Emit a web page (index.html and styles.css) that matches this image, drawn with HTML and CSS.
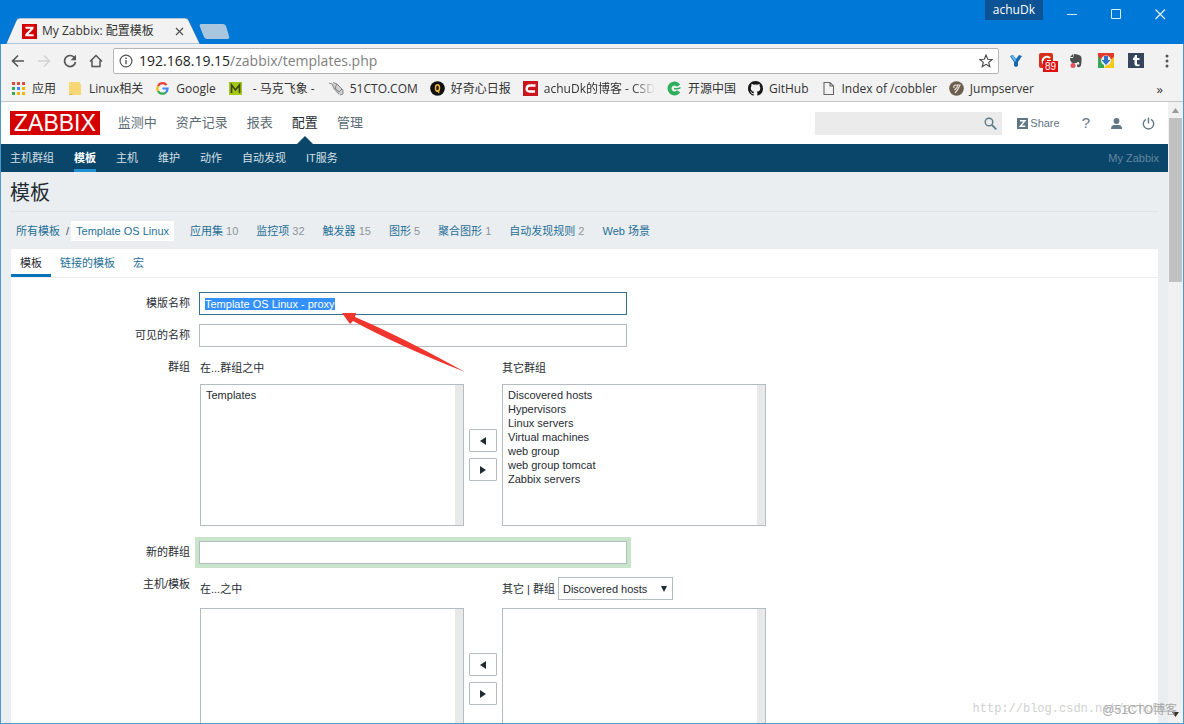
FILE: index.html
```html
<!DOCTYPE html>
<html lang="zh-CN">
<head>
<meta charset="utf-8">
<title>My Zabbix: 配置模板</title>
<link rel="stylesheet" href="styles.css">
</head>
<body>
<div class="window">
  <div class="titlebar">
    <div class="tab">
      <svg class="tab-shape" viewBox="0 0 194 26" preserveAspectRatio="none"><path d="M0 26 L10 3 Q11 0 14 0 H179 Q182 0 183 3 L194 26Z" fill="#f2f2f2" stroke="#0a5ea8" stroke-width=".6"/></svg>
      <svg class="favicon" width="15" height="15" viewBox="0 0 15 15"><rect width="15" height="15" fill="#d40000"/><path d="M3.500 2.800h8v2L6.300 10.200h5.300v2H3.300v-2L8.500 4.800h-5z" fill="#fff"/></svg>
      <span class="tab-title">My Zabbix: 配置模板</span>
      <button class="tab-close" aria-label="关闭标签页"><svg width="9" height="9" viewBox="0 0 9 9"><path d="M1 1l7 7M8 1l-7 7" stroke="#555" stroke-width="1.3"/></svg></button>
    </div>
    <button class="new-tab" aria-label="新标签页"><svg width="31" height="15" viewBox="0 0 31 15"><path d="M2 0h22q2 0 3 2l3 10q1 3-2 3H8q-2 0-3-2L1 3Q0 0 2 0z" fill="#a9c6de"/></svg></button>
    <div class="win-controls">
      <span class="profile">achuDk</span>
      <button aria-label="最小化"><svg width="11" height="11" viewBox="0 0 11 11"><path d="M0 5.500h10" stroke="#cfeaf5"/></svg></button>
      <button aria-label="最大化"><svg width="11" height="11" viewBox="0 0 11 11"><path d="M.5.5h9v9h-9z" fill="none" stroke="#d8f0f5"/></svg></button>
      <button aria-label="关闭"><svg width="11" height="11" viewBox="0 0 11 11"><path d="M.5.5l9.500 9.500M10 .5L.5 10" stroke="#e8f4fa" stroke-width="1.100"/></svg></button>
    </div>
  </div>

  <div class="toolbar">
    <div class="nav-buttons">
      <button aria-label="后退"><svg width="14" height="14" viewBox="0 0 14 14"><path d="M13 7H2M7 1.500L1.500 7 7 12.500" fill="none" stroke="#555" stroke-width="1.600"/></svg></button>
      <button aria-label="前进"><svg width="14" height="14" viewBox="0 0 14 14"><path d="M1 7h11M7 1.500L12.500 7 7 12.500" fill="none" stroke="#d3d3d3" stroke-width="1.600"/></svg></button>
      <button aria-label="重新加载"><svg width="14" height="14" viewBox="0 0 14 14"><path d="M11.500 3.700A5.500 5.500 0 1 0 12.500 8" fill="none" stroke="#555" stroke-width="1.700"/><path d="M13 .8v5.400H7.600z" fill="#555"/></svg></button>
      <button aria-label="主页"><svg width="14" height="14" viewBox="0 0 14 14"><path d="M1 7.500L7 1.500l6 6M3 6.500V12.500h8V6.500" fill="none" stroke="#555" stroke-width="1.500"/></svg></button>
    </div>
    <div class="omnibox">
      <svg width="14" height="14" viewBox="0 0 14 14"><circle cx="7" cy="7" r="5.900" fill="none" stroke="#555" stroke-width="1.200"/><path d="M7 6v4.200M7 3.600v1.400" stroke="#555" stroke-width="1.400"/></svg>
      <span class="url"><span class="host">192.168.19.15</span>/zabbix/templates.php</span>
      <button aria-label="收藏"><svg width="14" height="14" viewBox="0 0 14 14"><path d="M7 1l1.700 4.200 4.400.3-3.400 2.900 1.100 4.400L7 10.400l-3.800 2.400 1.100-4.400L.9 5.500l4.400-.3z" fill="none" stroke="#444" stroke-width="1.100"/></svg></button>
    </div>
    <div class="extensions">
      <button aria-label="扩展 Y"><svg width="16" height="16" viewBox="0 0 16 16"><path d="M2 3l3-1 3 4 3-4 3 1-4 6v4l-2 1-2-1V9z" fill="#1767b3"/><path d="M3 3l2-.5L8 7l-1 2z" fill="#60c3f2"/></svg></button>
      <button class="ext-badged" aria-label="扩展 C"><svg width="16" height="16" viewBox="0 0 16 16"><rect x="1" width="14" height="15" rx="2" fill="#d83018"/><path d="M12 5a4.300 4.300 0 1 0 0 6M9 8h4" fill="none" stroke="#fff" stroke-width="2"/></svg><span class="badge">89</span></button>
      <button aria-label="Evernote"><svg width="16" height="16" viewBox="0 0 16 16"><path d="M6 1q4 0 6 1.500 2 1 1.500 5 0 6-2 6.500-3 1-2.500-2 1-1.500 2 0 1-3-1-3-3 2-5.500 1Q2 9 2 5h3z" fill="#4b4f4d"/><path d="M2 4l3-3v3z" fill="#4b4f4d"/><circle cx="5" cy="12.500" r="2.500" fill="#e2535d"/></svg></button>
      <button aria-label="下载"><svg width="16" height="16" viewBox="0 0 16 16"><path d="M0 0h16v8H0z" fill="#e23b2e"/><path d="M0 3l6 7v5H0z" fill="#3aa757"/><path d="M16 4v11H6l5-7z" fill="#f8c816"/><circle cx="8" cy="7.500" r="5" fill="#e9eef5"/><path d="M6 3h4v4h2.500L8 12 3.500 7H6z" fill="#2f73c8"/></svg></button>
      <button aria-label="Tumblr"><svg width="16" height="16" viewBox="0 0 16 16"><rect width="16" height="15" fill="#35465c"/><path d="M7 2h2v3h2.500v2H9v3.500q0 1.500 2.500.8V13Q6.500 14.200 6.500 10.500V7H5V5.300Q7 4.500 7 2z" fill="#fff"/></svg></button>
      <button class="menu" aria-label="菜单"><svg width="4" height="14" viewBox="0 0 4 14"><g fill="#555"><circle cx="2" cy="2" r="1.500"/><circle cx="2" cy="7" r="1.500"/><circle cx="2" cy="12" r="1.500"/></g></svg></button>
    </div>
  </div>

  <nav class="bookmarks">
    <a href="#"><svg width="15" height="15" viewBox="0 0 15 15"><path d="M1 1h3v3H1zM6 1h3v3H6zM11 1h3v3h-3z" fill="#e04a3f"/><path d="M1 6h3v3H1z" fill="#3aa757"/><path d="M6 6h3v3H6z" fill="#4285f4"/><path d="M11 6h3v3h-3zM11 11h3v3h-3zM6 11h3v3H6z" fill="#f4b400"/><path d="M1 11h3v3H1z" fill="#3aa757"/></svg>应用</a>
    <a href="#"><svg width="15" height="15" viewBox="0 0 15 15"><path d="M1 1h11v2h1v11H1z" fill="#f7d774"/><path d="M1 13h3l1 1H1z" fill="#d9b44c"/></svg>Linux相关</a>
    <a href="#"><svg width="15" height="15" viewBox="0 0 15 15" fill="none" stroke-width="2.200"><path d="M11.500 4A5 5 0 0 0 3 5" stroke="#ea4335"/><path d="M3 5a5 5 0 0 0 0 5" stroke="#fbbc05"/><path d="M3 10a5 5 0 0 0 8 1.200" stroke="#34a853"/><path d="M7.500 7.500h5q0 2.500-1.500 4" stroke="#4285f4"/></svg>Google</a>
    <a href="#"><svg width="15" height="15" viewBox="0 0 15 15"><rect x="1" y="1" width="13" height="13" fill="#a5c61b"/><path d="M3.500 12V4L7.500 9l4-5v8" fill="none" stroke="#3c4a10" stroke-width="1.700"/></svg><span class="spaced">- 马克飞象 -</span></a>
    <a href="#"><svg width="15" height="15" viewBox="0 0 15 15"><path d="M3 2l5 1 6 6v4l-4 1-6-6z" fill="#cfcfcf"/><path d="M0 2l3 1 2 4M4 1.500l4 1.500 6 6v4l-3 1M5 7l5 6M8 3L6 7l4 4 3-3" stroke="#888" fill="none"/></svg>51CTO.COM</a>
    <a href="#"><svg width="15" height="15" viewBox="0 0 15 15"><circle cx="7.500" cy="7.500" r="7.300" fill="#111"/><ellipse cx="7.500" cy="7" rx="2" ry="3.300" fill="none" stroke="#f0b73a" stroke-width="1.500"/><path d="M7.500 9l1.500 3" stroke="#f0b73a" stroke-width="1.400"/></svg>好奇心日报</a>
    <a href="#"><svg width="15" height="15" viewBox="0 0 15 15"><rect width="15" height="15" fill="#c9151e"/><path d="M12.500 4.500H7Q4 4.500 3.700 7.500 3.500 10.500 6.500 10.500h5.500" fill="none" stroke="#fff" stroke-width="2.400"/></svg><span class="faded">achuDk的博客 - CSD</span></a>
    <a href="#"><svg width="15" height="15" viewBox="0 0 15 15"><path d="M11.600 4.600A5 5 0 1 0 11.600 10.400" fill="none" stroke="#2fae5c" stroke-width="4"/><path d="M7 7.500q4 1 6.500-1" fill="none" stroke="#2fae5c" stroke-width="1.500"/></svg>开源中国</a>
    <a href="#"><svg width="15" height="15" viewBox="0 0 16 16"><path fill="#181616" d="M8 0C3.580 0 0 3.580 0 8c0 3.540 2.290 6.530 5.470 7.590.4.070.55-.17.55-.38v-1.490c-2.010.37-2.530-.49-2.690-.94-.09-.23-.48-.94-.82-1.130-.28-.15-.68-.52-.01-.53.63-.01 1.080.58 1.230.82.720 1.210 1.870.87 2.330.66.070-.52.280-.87.510-1.070-1.780-.2-3.640-.89-3.640-3.950 0-.87.310-1.590.82-2.150-.08-.2-.36-1.020.08-2.120 0 0 .67-.21 2.200.82a7.500 7.500 0 0 1 4 0c1.530-1.040 2.200-.82 2.200-.82.440 1.100.160 1.920.080 2.120.510.560.820 1.270.820 2.150 0 3.070-1.870 3.750-3.650 3.950.290.250.540.730.540 1.480v2.200c0 .21.150.46.550.38A8 8 0 0 0 16 8c0-4.420-3.580-8-8-8z"/></svg>GitHub</a>
    <a href="#"><svg width="15" height="15" viewBox="0 0 15 15"><path d="M3 1.500h6l3.500 3.500v8.500H3zM9 1.500V5h3.500" fill="none" stroke="#666" stroke-width="1.100"/></svg>Index of /cobbler</a>
    <a href="#"><svg width="15" height="15" viewBox="0 0 15 15"><circle cx="7.500" cy="7.500" r="7.300" fill="#6b5f50"/><path d="M5 7q-1-3 2-3 2 0 1 2.500L5.500 9M8 4h3Q9 9 6 12" fill="none" stroke="#e9e2d6" stroke-width="1.200"/></svg>Jumpserver</a>
    <button class="more" aria-label="更多书签">»</button>
  </nav>

  <div class="viewport">
    <div class="page">
      <header class="header">
        <a class="logo" href="#">ZABBIX</a>
        <nav class="main-nav">
          <a href="#">监测中</a><a href="#">资产记录</a><a href="#">报表</a><a href="#" class="selected">配置</a><a href="#">管理</a>
        </nav>
        <div class="search">
          <input type="text" aria-label="搜索">
          <button aria-label="搜索"><svg width="13" height="13" viewBox="0 0 13 13"><circle cx="5" cy="5" r="3.800" fill="none" stroke="#5f7a86" stroke-width="1.400"/><path d="M7.800 7.800l4.500 4.500" stroke="#5f7a86" stroke-width="1.800"/></svg></button>
        </div>
        <a class="share" href="#"><svg width="11" height="11" viewBox="0 0 11 11"><rect width="11" height="11" fill="#5f7684"/><path d="M3 2.800h5L3.300 8.200h5" fill="none" stroke="#fff" stroke-width="1.400"/></svg>Share</a>
        <a class="help" href="#">?</a>
        <a class="icon-link" href="#" aria-label="用户"><svg width="13" height="13" viewBox="0 0 13 13" fill="#5f7684"><circle cx="6.500" cy="4" r="2.900"/><path d="M1 12q0-4 3.500-4h4Q12 8 12 12z"/></svg></a>
        <a class="icon-link" href="#" aria-label="退出"><svg width="13" height="13" viewBox="0 0 13 13"><path d="M4 2.300a5.200 5.200 0 1 0 5 0M6.500.5v6" fill="none" stroke="#5f7684" stroke-width="1.400"/></svg></a>
      </header>

      <nav class="sub-nav">
        <a href="#">主机群组</a><a href="#" class="selected">模板</a><a href="#">主机</a><a href="#">维护</a><a href="#">动作</a><a href="#">自动发现</a><a href="#">IT服务</a>
        <span class="server-name">My Zabbix</span>
      </nav>

      <main class="content">
        <h1>模板</h1>
        <nav class="filter">
          <a class="all" href="#">所有模板</a><span class="slash">/</span><a class="current" href="#">Template OS Linux</a>
          <span><a href="#">应用集</a> 10</span>
          <span><a href="#">监控项</a> 32</span>
          <span><a href="#">触发器</a> 15</span>
          <span><a href="#">图形</a> 5</span>
          <span><a href="#">聚合图形</a> 1</span>
          <span><a href="#">自动发现规则</a> 2</span>
          <span><a href="#">Web 场景</a></span>
        </nav>

        <section class="card">
          <nav class="tabs"><a href="#" class="selected">模板</a><a href="#">链接的模板</a><a href="#">宏</a></nav>
          <form class="form">
            <label class="label" for="name">模版名称</label>
            <div class="field">
              <input id="name" class="text" type="text" value="Template OS Linux - proxy">
              <svg class="arrow" width="124" height="60" viewBox="0 0 124 60"><path d="M0 0L14 0 13 4Q60 24 123 59Q55 32 11 8L8 11z" fill="#f0352f"/></svg>
            </div>
            <label class="label" for="visible">可见的名称</label>
            <div class="field"><input id="visible" class="text" type="text"></div>

            <span class="label">群组</span>
            <div class="field picker">
              <label class="head" for="in-groups">在...群组之中</label>
              <label class="head last" for="other-groups">其它群组</label>
              <select id="in-groups" class="list" multiple><option>Templates</option></select>
              <div class="moves">
                <button type="button" aria-label="添加群组"><svg width="6" height="8" viewBox="0 0 6 8"><path d="M6 0v8L0 4z" fill="#1f2c33"/></svg></button>
                <button type="button" aria-label="移除群组"><svg width="6" height="8" viewBox="0 0 6 8"><path d="M0 0v8l6-4z" fill="#1f2c33"/></svg></button>
              </div>
              <select id="other-groups" class="list" multiple>
                <option>Discovered hosts</option><option>Hypervisors</option><option>Linux servers</option><option>Virtual machines</option><option>web group</option><option>web group tomcat</option><option>Zabbix servers</option>
              </select>
            </div>

            <label class="label label-new" for="new-group">新的群组</label>
            <div class="field field-new"><input id="new-group" class="text highlighted" type="text"></div>

            <span class="label label-hosts">主机/模板</span>
            <div class="field picker picker-hosts">
              <label class="head" for="in-hosts">在...之中</label>
              <div class="head last"><label for="group">其它 | 群组</label>
                <span class="dropdown"><select id="group"><option>Discovered hosts</option></select><svg width="6" height="6" viewBox="0 0 6 6"><path d="M0 0h6L3 6z" fill="#1f2c33"/></svg></span>
              </div>
              <select id="in-hosts" class="list" multiple></select>
              <div class="moves">
                <button type="button" aria-label="添加主机"><svg width="6" height="8" viewBox="0 0 6 8"><path d="M6 0v8L0 4z" fill="#1f2c33"/></svg></button>
                <button type="button" aria-label="移除主机"><svg width="6" height="8" viewBox="0 0 6 8"><path d="M0 0v8l6-4z" fill="#1f2c33"/></svg></button>
              </div>
              <select class="list" multiple aria-label="其它"></select>
            </div>
          </form>
        </section>
      </main>
    </div>
    <div class="scrollbar">
      <svg width="7" height="5" viewBox="0 0 7 5"><path d="M3.500 0L7 5H0z" fill="#9a9a9a"/></svg>
      <div class="thumb"></div>
      <svg class="down" width="7" height="5" viewBox="0 0 7 5"><path d="M0 0h7L3.500 5z" fill="#333"/></svg>
    </div>
    <span class="watermark csdn">http://blog.csdn.net/achuDk</span>
    <span class="watermark cto">@51CTO博客</span>
  </div>
</div>
<script src="main.js"></script>
</body>
</html>
```
FILE: styles.css
```css
* { box-sizing: border-box; }
body {
  margin: 0;
  height: 100vh;
  overflow: hidden;
  font: 11px/14px "Liberation Sans", "Noto Sans CJK SC", sans-serif;
  color: #1f2c33;
}
button { margin: 0; padding: 0; border: 0; background: none; font: inherit; color: inherit; }
svg { display: block; flex: none; }
a { color: inherit; text-decoration: none; }
input, select { font: inherit; color: inherit; }

.window {
  display: flex;
  flex-direction: column;
  height: 100vh;
  border: solid #4d9ac9;
  border-width: 0 1px 1px;
  background: #f2f2f2;
}

/* Browser chrome */
.titlebar, .toolbar, .bookmarks { font-family: "Open Sans", "Noto Sans CJK SC", sans-serif; }
.titlebar {
  display: flex;
  align-items: flex-end;
  height: 44px;
  margin: 0 -1px;
  padding-left: 6px;
  background: #0078d7;
}
.tab {
  position: relative;
  display: flex;
  align-items: center;
  width: 194px;
  height: 26px;
  padding: 0 16px;
  font-size: 12px;
  color: #333;
}
.tab-shape { position: absolute; inset: 0; width: 100%; height: 100%; }
.favicon, .tab-title, .tab-close { position: relative; }
.tab-title { flex: 1; margin-left: 5px; white-space: nowrap; }
.new-tab { margin: 0 0 5px -1px; }
.win-controls {
  display: flex;
  align-self: flex-start;
  gap: 33px;
  margin-left: auto;
  padding-right: 18px;
}
.win-controls button { padding-top: 9px; }
.profile {
  margin-right: -9px;
  padding: 0 8px;
  background: #0b5394;
  color: #fff;
  font-size: 12px;
  line-height: 20px;
}
.toolbar { display: flex; align-items: center; height: 34px; padding: 0 10px; }
.nav-buttons { display: flex; gap: 12px; margin-right: 10px; }
.omnibox {
  flex: 1;
  display: flex;
  align-items: center;
  height: 26px;
  padding: 0 5px;
  border: 1px solid #b5b5b5;
  border-radius: 2px;
  background: #fff;
}
.url { flex: 1; margin-left: 6px; font-size: 14px; line-height: 18px; color: #808080; }
.host { color: #222; }
.extensions { display: flex; align-items: center; gap: 14px; margin-left: 9px; }
.extensions .menu { width: 12px; padding-left: 4px; margin-left: 3px; }
.ext-badged { position: relative; }
.badge {
  position: absolute;
  left: 5px;
  top: 8px;
  padding: 0 2px;
  background: #e01010;
  color: #fff;
  font: 10px/11px "Liberation Sans", sans-serif;
}
.bookmarks {
  display: flex;
  gap: 12px;
  height: 24px;
  padding: 0 20px 2px 10px;
  border-bottom: 1px solid #c4c4c4;
  font-size: 12px;
  color: #333;
}
.bookmarks a { display: flex; align-items: center; gap: 6px; white-space: nowrap; }
.spaced { padding: 0 2px 0 4px; }
.faded {
  -webkit-mask-image: linear-gradient(to right, #000 80%, transparent);
  mask-image: linear-gradient(to right, #000 80%, transparent);
}
.more { margin-left: auto; font-size: 13px; }

/* Page */
.viewport { position: relative; flex: 1; display: flex; min-height: 0; overflow: hidden; }
.page { flex: 1; min-width: 0; background: #ebeef0; }
.scrollbar {
  display: flex;
  flex-direction: column;
  align-items: center;
  width: 15px;
  padding: 6px 1px;
  background: #f1f1f1;
}
.thumb { width: 13px; height: 164px; margin-top: 5px; background: #c1c1c1; }
.down { margin-top: auto; }

.header { display: flex; align-items: center; height: 42px; padding: 0 13px 0 9px; background: #fff; }
.logo { padding: 0 4px; background: #d40000; color: #fff; font-size: 23px; line-height: 24px; }
.main-nav { display: flex; align-self: stretch; gap: 19px; margin-left: 18px; font-size: 13px; line-height: 42px; color: #5c6b75; }
.main-nav a { position: relative; }
.main-nav .selected { color: #1f2c33; }
.main-nav .selected::after {
  content: "";
  position: absolute;
  left: 50%;
  bottom: 0;
  margin-left: -8px;
  border: solid transparent;
  border-width: 0 8px 8px;
  border-bottom-color: #0a466a;
}
.search { display: flex; align-items: center; width: 187px; height: 23px; margin-left: auto; padding-right: 5px; background: #ebebeb; }
.search input { flex: 1; min-width: 0; border: 0; background: none; }
.share { display: flex; align-items: center; gap: 2px; margin-left: 15px; color: #5f7684; }
.help { margin: 0 20px 0 22px; color: #5f7684; font-size: 15px; }
.icon-link + .icon-link { margin-left: 19px; }

.sub-nav { display: flex; gap: 20px; height: 28px; padding: 0 9px; background: #0a466a; color: #d5e0e7; line-height: 28px; }
.sub-nav .selected { border-bottom: 3px solid #1f8fd0; color: #fff; font-weight: bold; }
.server-name { margin-left: auto; color: #6487a0; }

.content { padding: 0 10px; }
h1 { margin: 0 0 0 -1px; padding: 8px 0 4px; border-bottom: 1px solid #dfe4e7; font-size: 20px; font-weight: normal; line-height: 27px; }
.filter { display: flex; align-items: center; gap: 18px; height: 37px; padding-left: 5px; color: #8b959c; }
.filter a { color: #1f6f97; }
.filter .slash { margin: 0 -16px 0 -12px; color: #44525a; }
.filter .current { margin-right: -2px; padding: 3px 5px; background: #fff; }
.card { background: #fff; }
.tabs { display: flex; height: 29px; border-bottom: 1px solid #ebeef0; color: #1f6f97; line-height: 28px; }
.tabs a { padding: 0 9px; }
.tabs .selected { border-bottom: 3px solid #0275b8; color: #1f2c33; }

/* Template form */
.form { display: grid; grid-template-columns: 179px 1fr; column-gap: 9px; row-gap: 9px; padding-top: 14px; }
.label { padding-top: 4px; text-align: right; }
.field { position: relative; }
.text { display: block; width: 428px; height: 23px; padding: 0 5px; border: 1px solid #b4bcc1; outline: 0; background: #fff; }
.text:focus { border-color: #34738c; }
.text::selection { background: #3390ff; color: #fff; }
.arrow { position: absolute; left: 143px; top: 21px; z-index: 1; }
.highlighted { box-shadow: 0 0 0 4px #c8e5cb; }
.picker { display: grid; grid-template-columns: 264px 28px 264px; column-gap: 5px; padding: 5px 0 0 1px; }
.head { padding-bottom: 9px; }
.last { grid-column: 3; }
.list {
  height: 142px;
  padding: 3px 0;
  border: 1px solid #b4bcc1;
  border-radius: 0;
  outline: 0;
  overflow: hidden;
  background: linear-gradient(#e9e9e9, #e9e9e9) right / 8px 100% no-repeat #fff;
}
.list option { padding: 1px 5px; }
.moves { display: flex; flex-direction: column; justify-content: center; gap: 6px; }
.moves button { display: grid; place-items: center; height: 23px; border: 1px solid #b4bcc1; border-radius: 1px; background: #fff; }
.label-new { padding-top: 10px; }
.field-new { padding: 6px 0 4px; }
.label-hosts { padding-top: 0; }
.picker-hosts { align-items: center; padding-top: 0; }
.picker-hosts .head { padding-bottom: 8px; }
.picker-hosts .last { display: flex; align-items: center; gap: 3px; white-space: nowrap; }
.dropdown { position: relative; }
.dropdown select { appearance: none; display: block; width: 115px; height: 23px; padding: 0 4px; border: 1px solid #b4bcc1; border-radius: 0; background: #fff; }
.dropdown svg { position: absolute; right: 6px; top: 9px; }

.watermark { position: absolute; bottom: 6px; white-space: nowrap; }
.csdn { right: 16px; color: #d0d0d0; font: 12px/16px "Liberation Mono", monospace; }
.cto { right: 6px; color: #a8a8a8; font-size: 12px; }
```
FILE: main.js
```js
const nameField = document.getElementById("name");
nameField.focus();
nameField.select();
```
